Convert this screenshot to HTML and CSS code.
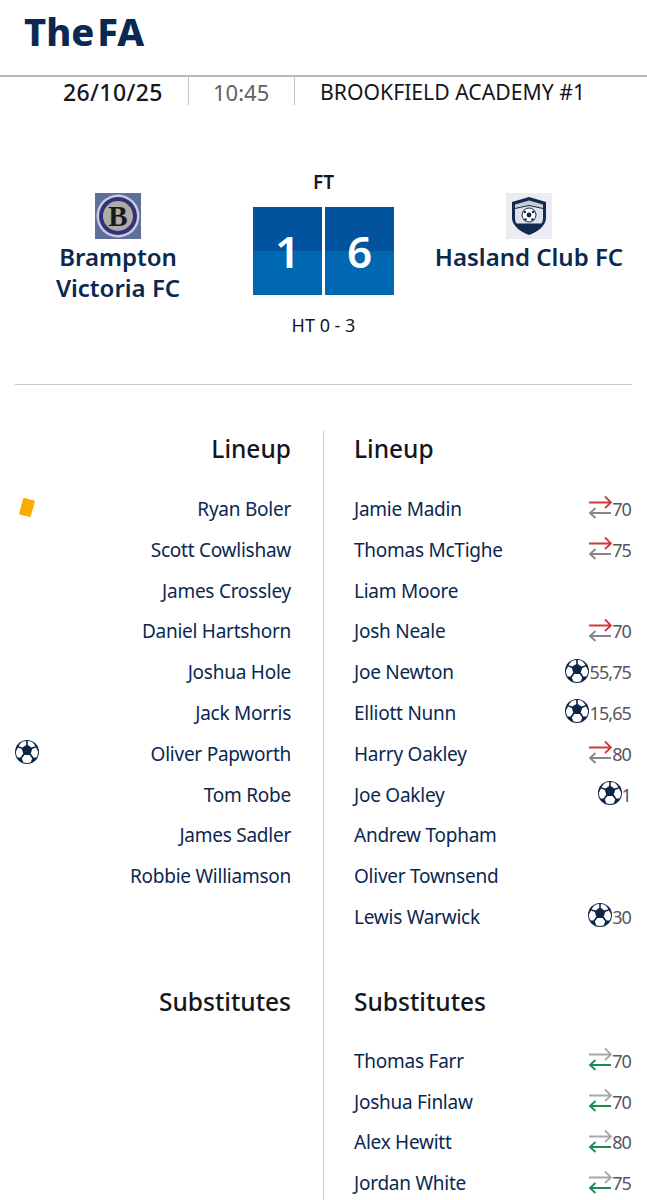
FILE: index.html
```html
<!DOCTYPE html>
<html lang="en">
<head>
<meta charset="utf-8">
<title>The FA - Match details</title>
<link rel="stylesheet" href="styles.css">
</head>
<body>
<svg class="defs" width="0" height="0" aria-hidden="true">
  <symbol id="ball" viewBox="0 0 24 24">
    <circle cx="12" cy="12" r="12" fill="#0b2447"/>
    <path fill="#fff" d="M8 1.4 L11.2 1 V5 L7.6 7.6 L3.6 6.2 C4.6 4 6.2 2.4 8 1.4Z"/>
    <path fill="#fff" d="M16 1.4 L12.8 1 V5 L16.4 7.6 L20.4 6.2 C19.4 4 17.8 2.4 16 1.4Z"/>
    <path fill="#fff" d="M1 11.4 L3 7.6 L6.8 9 L8.2 13.6 L5.6 17.4 L2.6 17.6 C1.4 15.8 .9 13.6 1 11.4Z"/>
    <path fill="#fff" d="M23 11.4 L21 7.6 L17.2 9 L15.8 13.6 L18.4 17.4 L21.4 17.6 C22.6 15.8 23.1 13.6 23 11.4Z"/>
    <path fill="#fff" d="M9.4 15 H14.6 L17.2 18.6 L15.8 22.2 C13.4 23.2 10.6 23.2 8.2 22.2 L6.8 18.6Z"/>
  </symbol>
  <symbol id="swap-off" viewBox="0 0 24 24">
    <path class="swap-red" d="M1 7.5H22.5M17 1.5L23 7.5L17 13"/>
    <path class="swap-grey" d="M23 18H2M7.5 13L2 18L7.5 23"/>
  </symbol>
  <symbol id="swap-on" viewBox="0 0 24 24">
    <path class="swap-lgrey" d="M1 7.5H22.5M17 1.5L23 7.5L17 13"/>
    <path class="swap-green" d="M23 18H2M7.5 13L2 18L7.5 23"/>
  </symbol>
</svg>

<header class="site-header">
  <div class="logo"><span>The</span><span class="logo-fa">FA</span></div>
</header>

<section class="meta">
  <div class="meta-date">26/10/25</div>
  <div class="meta-time">10:45</div>
  <div class="meta-venue">BROOKFIELD ACADEMY #1</div>
</section>

<section class="hero">
  <div class="team">
    <svg class="crest" viewBox="0 0 46 46" role="img" aria-label="Brampton Victoria FC crest">
      <rect width="46" height="46" fill="#5f6f9c"/>
      <circle cx="23" cy="23" r="21.5" fill="#c9cad6"/>
      <circle cx="23" cy="23" r="19" fill="#35307c"/>
      <circle cx="23" cy="23" r="15" fill="#aeaca8"/>
      <text x="23" y="33" class="crest-b">B</text>
    </svg>
    <div class="team-name">Brampton<br>Victoria FC</div>
  </div>
  <div class="score-wrap">
    <div class="status">FT</div>
    <div class="score">
      <div class="score-box">1</div>
      <div class="score-box">6</div>
    </div>
    <div class="half-time">HT 0 - 3</div>
  </div>
  <div class="team">
    <svg class="crest" viewBox="0 0 46 46" role="img" aria-label="Hasland Club FC crest">
      <rect width="46" height="46" fill="#ecebf1"/>
      <path d="M23 4L40 9V25C40 33 31 39 23 42C15 39 6 33 6 25V9Z" fill="#14294d"/>
      <path d="M23 7.500L37 11.500V15L23 12L9 15V11.500Z" fill="#c9ccd6"/>
      <path d="M23 13L37 16V25C37 27 36.500 29 35.500 30.500H10.500C9.500 29 9 27 9 25V16Z" fill="#dfe1e8"/>
      <circle cx="23" cy="22" r="7" fill="#fff" stroke="#14294d" stroke-width="1"/>
      <circle cx="23" cy="22" r="2.400" fill="#14294d"/>
      <circle cx="18.800" cy="19" r="1.300" fill="#14294d"/>
      <circle cx="27.200" cy="19" r="1.300" fill="#14294d"/>
      <circle cx="19.500" cy="26.500" r="1.300" fill="#14294d"/>
      <circle cx="26.500" cy="26.500" r="1.300" fill="#14294d"/>
    </svg>
    <div class="team-name">Hasland Club FC</div>
  </div>
</section>

<div class="rule"></div>

<section class="lineups">
  <div class="col col-home">
    <h2 class="col-title">Lineup</h2>
    <ul class="players">
      <li class="player"><span class="event"><span class="card"></span></span><span class="name">Ryan Boler</span></li>
      <li class="player"><span class="name">Scott Cowlishaw</span></li>
      <li class="player"><span class="name">James Crossley</span></li>
      <li class="player"><span class="name">Daniel Hartshorn</span></li>
      <li class="player"><span class="name">Joshua Hole</span></li>
      <li class="player"><span class="name">Jack Morris</span></li>
      <li class="player"><span class="event"><svg class="ico"><use href="#ball"/></svg></span><span class="name">Oliver Papworth</span></li>
      <li class="player"><span class="name">Tom Robe</span></li>
      <li class="player"><span class="name">James Sadler</span></li>
      <li class="player"><span class="name">Robbie Williamson</span></li>
      <li class="player"></li>
    </ul>
    <h2 class="col-title subs-title">Substitutes</h2>
  </div>
  <div class="col col-away">
    <h2 class="col-title">Lineup</h2>
    <ul class="players">
      <li class="player"><span class="name">Jamie Madin</span><span class="event"><svg class="ico"><use href="#swap-off"/></svg>70</span></li>
      <li class="player"><span class="name">Thomas McTighe</span><span class="event"><svg class="ico"><use href="#swap-off"/></svg>75</span></li>
      <li class="player"><span class="name">Liam Moore</span></li>
      <li class="player"><span class="name">Josh Neale</span><span class="event"><svg class="ico"><use href="#swap-off"/></svg>70</span></li>
      <li class="player"><span class="name">Joe Newton</span><span class="event"><svg class="ico"><use href="#ball"/></svg>55,75</span></li>
      <li class="player"><span class="name">Elliott Nunn</span><span class="event"><svg class="ico"><use href="#ball"/></svg>15,65</span></li>
      <li class="player"><span class="name">Harry Oakley</span><span class="event"><svg class="ico"><use href="#swap-off"/></svg>80</span></li>
      <li class="player"><span class="name">Joe Oakley</span><span class="event"><svg class="ico"><use href="#ball"/></svg>1</span></li>
      <li class="player"><span class="name">Andrew Topham</span></li>
      <li class="player"><span class="name">Oliver Townsend</span></li>
      <li class="player"><span class="name">Lewis Warwick</span><span class="event"><svg class="ico"><use href="#ball"/></svg>30</span></li>
    </ul>
    <h2 class="col-title subs-title">Substitutes</h2>
    <ul class="players">
      <li class="player"><span class="name">Thomas Farr</span><span class="event"><svg class="ico"><use href="#swap-on"/></svg>70</span></li>
      <li class="player"><span class="name">Joshua Finlaw</span><span class="event"><svg class="ico"><use href="#swap-on"/></svg>70</span></li>
      <li class="player"><span class="name">Alex Hewitt</span><span class="event"><svg class="ico"><use href="#swap-on"/></svg>80</span></li>
      <li class="player"><span class="name">Jordan White</span><span class="event"><svg class="ico"><use href="#swap-on"/></svg>75</span></li>
    </ul>
  </div>
</section>
</body>
</html>
```
FILE: styles.css
```css
* { box-sizing: border-box; }
html, body { margin: 0; padding: 0; }
body {
  height: 1200px;
  overflow: hidden;
  background: #fff;
  font-family: "Noto Sans", "Open Sans", sans-serif;
  color: #0b2447;
}
.defs { position: absolute; }

.site-header {
  height: 77px;
  border-bottom: 2px solid #b7bac6;
  padding: 8px 0 0 24px;
}
.logo {
  display: flex;
  gap: 3px;
  font-size: 38px;
  font-weight: 800;
  line-height: 46px;
  letter-spacing: 0;
  color: #0a2850;
}

.meta {
  display: flex;
  height: 28px;
  padding-left: 63px;
  align-items: stretch;
  font-size: 22px;
  line-height: 30px;
  color: #16161d;
}
.meta-date { width: 126px; font-size: 23px; font-weight: 500; letter-spacing: 0.4px; border-right: 1px solid #c4c4c8; }
.meta-time { width: 106px; padding-left: 24px; color: #62626a; border-right: 1px solid #c4c4c8; }
.meta-venue { padding-left: 25px; font-size: 21.2px; }

.hero {
  display: grid;
  grid-template-columns: 206px 1fr 206px;
  padding: 0 15px;
  margin-top: 66px;
  height: 213px;
}
.team { display: flex; flex-direction: column; align-items: center; padding-top: 22px; }
.crest { width: 46px; height: 46px; display: block; }
.crest-b { font-family: "Liberation Serif", serif; font-size: 29px; font-weight: 700; text-anchor: middle; fill: #1a1a1a; }
.team-name {
  margin-top: 3px;
  font-size: 24px;
  line-height: 30.5px;
  font-weight: 600;
  text-align: center;
  color: #0a2850;
}
.score-wrap { display: flex; flex-direction: column; align-items: center; }
.status { font-size: 19px; line-height: 22px; font-weight: 600; color: #16161d; margin-bottom: 14px; }
.score { display: flex; gap: 3px; }
.score-box {
  width: 69px;
  height: 88px;
  background: linear-gradient(#00539c 50%, #0068b2 50%);
  color: #fff;
  font-size: 44px;
  font-weight: 600;
  line-height: 88px;
  text-align: center;
}
.half-time { margin-top: 18px; font-size: 18px; line-height: 24px; color: #16161d; }

.rule { height: 1px; margin: 0 15px; background: #c9c9cd; }

.lineups {
  display: grid;
  grid-template-columns: 324px 1fr;
  margin-top: 46px;
}
.col-home { padding-right: 32px; border-right: 1px solid #c9c9cd; height: 800px; }
.col-away { padding-left: 30px; padding-right: 16px; }
.col-title {
  margin: -1px 0 21px;
  font-size: 24.5px;
  line-height: 38px;
  font-weight: 500;
  color: #16161d;
}
.col-home .col-title { text-align: right; }
.subs-title { margin-top: 45px; margin-bottom: 20px; }
.players { list-style: none; margin: 0; padding: 0; }
.player {
  display: flex;
  justify-content: space-between;
  align-items: center;
  height: 40.8px;
  font-size: 19px;
  letter-spacing: -0.25px;
  line-height: 40.8px;
  color: #0a2850;
}
.col-home .player { padding-left: 15px; }
.col-home .name { margin-left: auto; }
.event {
  display: flex;
  align-items: center;
  font-size: 18px;
  letter-spacing: -0.9px;
  color: #55555c;
}
.ico { width: 24px; height: 24px; display: block; transform: translateY(-2px); }
.card {
  display: block;
  width: 12px;
  height: 17px;
  margin-left: 6px;
  border-radius: 1px;
  background: #fbab00;
  transform: translateY(-2px) rotate(15deg);
}
.swap-red, .swap-grey, .swap-lgrey, .swap-green { fill: none; stroke-width: 1.8; }
.swap-red { stroke: #d2373c; }
.swap-grey { stroke: #85858b; }
.swap-lgrey { stroke: #a8a8ae; }
.swap-green { stroke: #1c8a55; }
```
